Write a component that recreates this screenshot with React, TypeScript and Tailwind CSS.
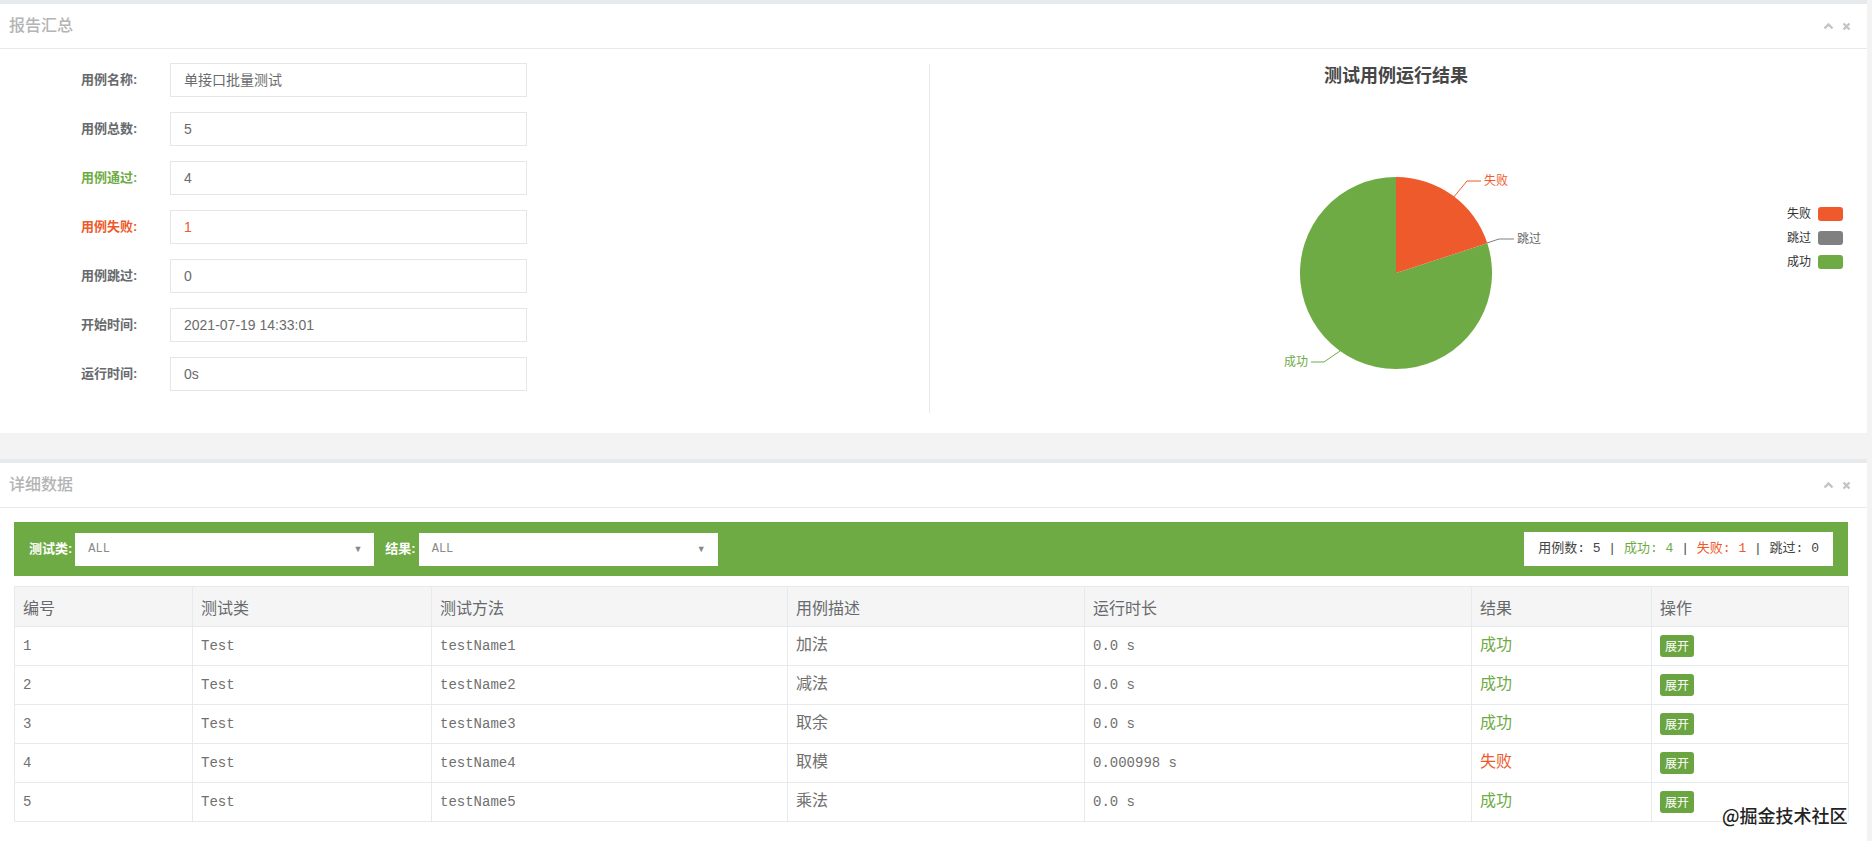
import React from "react";

const GREEN = "#6fab45";
const RED = "#ee5a2b";

const fields = [
  { label: "用例名称:", value: "单接口批量测试", tone: "" },
  { label: "用例总数:", value: "5", tone: "" },
  { label: "用例通过:", value: "4", tone: "pass" },
  { label: "用例失败:", value: "1", tone: "fail" },
  { label: "用例跳过:", value: "0", tone: "" },
  { label: "开始时间:", value: "2021-07-19 14:33:01", tone: "" },
  { label: "运行时间:", value: "0s", tone: "" },
];

const rows = [
  { id: 1, cls: "Test", method: "testName1", desc: "加法", time: "0.0 s", ok: true },
  { id: 2, cls: "Test", method: "testName2", desc: "减法", time: "0.0 s", ok: true },
  { id: 3, cls: "Test", method: "testName3", desc: "取余", time: "0.0 s", ok: true },
  { id: 4, cls: "Test", method: "testName4", desc: "取模", time: "0.000998 s", ok: false },
  { id: 5, cls: "Test", method: "testName5", desc: "乘法", time: "0.0 s", ok: true },
];

function PanelTools() {
  return (
    <div className="flex items-center gap-[8px] text-[#c4c4c4]">
      <svg width="11" height="8" viewBox="0 0 11 8">
        <path d="M1.5 6.5 L5.5 2.5 L9.5 6.5" fill="none" stroke="currentColor" strokeWidth="2.4" />
      </svg>
      <svg width="9" height="9" viewBox="0 0 9 9">
        <path d="M1.5 1.5 L7.5 7.5 M7.5 1.5 L1.5 7.5" fill="none" stroke="currentColor" strokeWidth="2.4" />
      </svg>
    </div>
  );
}

function PanelHeader({ title }: { title: string }) {
  return (
    <div className="h-[45px] border-b border-[#e7eaec] flex items-center justify-between pl-[9px] pr-[16px]">
      <h5 className="text-[16px] font-medium text-[#b4b4b4] leading-none">{title}</h5>
      <PanelTools />
    </div>
  );
}

function ResultChart() {
  // pie: center (466,209), r 96 — 1 fail of 5 starting from 12 o'clock
  return (
    <svg width="937" height="349" viewBox="0 0 937 349" className="block">
      <text x="466" y="18" textAnchor="middle" fontSize="18" fontWeight="bold" fill="#464646">
        测试用例运行结果
      </text>
      <path d="M466 209 L557.3 179.3 A96 96 0 1 1 466 113 Z" fill={GREEN} />
      <path d="M466 209 L466 113 A96 96 0 0 1 557.3 179.3 Z" fill={RED} />
      <path d="M523 134 L537 117 L551 117" fill="none" stroke={RED} strokeWidth="1" />
      <text x="554" y="121" fontSize="12" fill={RED}>失败</text>
      <path d="M557 179 L569 175 L584 175" fill="none" stroke="#808080" strokeWidth="1" />
      <text x="587" y="179" fontSize="12" fill="#666">跳过</text>
      <path d="M410 287 L394 298 L381 298" fill="none" stroke={GREEN} strokeWidth="1" />
      <text x="378" y="302" textAnchor="end" fontSize="12" fill={GREEN}>成功</text>

      <text x="857" y="154" fontSize="12" fill="#333">失败</text>
      <rect x="888" y="143" width="25" height="14" rx="3" fill={RED} />
      <text x="857" y="178" fontSize="12" fill="#333">跳过</text>
      <rect x="888" y="167" width="25" height="14" rx="3" fill="#808080" />
      <text x="857" y="202" fontSize="12" fill="#333">成功</text>
      <rect x="888" y="191" width="25" height="14" rx="3" fill={GREEN} />
    </svg>
  );
}

function Select({ label }: { label: string }) {
  return (
    <div className="flex items-center">
      <span className="text-white font-bold text-[13px] mr-[3px]">{label}</span>
      <div className="w-[299px] h-[33px] bg-white flex items-center justify-between pl-[13px] pr-[12px]">
        <span className="text-[12px] text-[#8a8a8a] font-['Liberation_Mono',monospace]">ALL</span>
        <span className="text-[9px] text-[#888] leading-none">▼</span>
      </div>
    </div>
  );
}

export default function App() {
  const cols = ["w-[178px]", "w-[239px]", "w-[356px]", "w-[297px]", "w-[387px]", "w-[180px]", "w-[197px]"];
  const heads = ["编号", "测试类", "测试方法", "用例描述", "运行时长", "结果", "操作"];

  return (
    <div className="relative min-h-screen bg-[#f3f3f4] pr-[5px] font-['Liberation_Sans','Noto_Sans_CJK_SC',sans-serif] text-[#676a6c]">
      {/* 报告汇总 */}
      <section className="bg-white border-t-4 border-[#e7eaec]">
        <PanelHeader title="报告汇总" />
        <div className="flex h-[384px]">
          <div className="w-[930px] pt-[14px] flex flex-col gap-[15px]">
            {fields.map((f) => (
              <div key={f.label} className="flex items-center pl-[81px]">
                <label
                  className={`w-[89px] text-[13px] font-bold ${
                    f.tone === "pass" ? "text-[#6fab45]" : f.tone === "fail" ? "text-[#ee5a2b]" : "text-[#676a6c]"
                  }`}
                >
                  {f.label}
                </label>
                <div
                  className={`w-[357px] h-[34px] border border-[#e5e6e7] flex items-center px-[13px] text-[14px] ${
                    f.tone === "fail" ? "text-[#ee5a2b]" : "text-[#6b6b6b]"
                  }`}
                >
                  {f.value}
                </div>
              </div>
            ))}
          </div>
          <div className="flex-1 mt-[15px] mb-[20px] border-l border-[#e7eaec]">
            <ResultChart />
          </div>
        </div>
      </section>

      {/* 详细数据 */}
      <section className="mt-[26px] bg-white border-t-4 border-[#e7eaec] min-h-[382px]">
        <PanelHeader title="详细数据" />
        <div className="pl-[14px] pr-[19px] pt-[14px] pb-[20px]">
          <div className="h-[54px] flex items-center justify-between pl-[15px] pr-[15px] bg-[#6fab45]">
            <div className="flex items-center gap-[11px]">
              <Select label="测试类:" />
              <Select label="结果:" />
            </div>
            <div className="h-[34px] bg-white flex items-center px-[14px] text-[13px] font-['Liberation_Mono','Noto_Sans_CJK_SC',monospace] text-[#444] whitespace-pre">
              <span>用例数: 5 | </span>
              <span className="text-[#6fab45]">成功: 4</span>
              <span> | </span>
              <span className="text-[#ee5a2b]">失败: 1</span>
              <span> | 跳过: 0</span>
            </div>
          </div>

          <table className="mt-[10px] w-[1834px] border-collapse table-fixed">
            <thead>
              <tr className="h-[40px] bg-[#f5f5f6]">
                {heads.map((h, i) => (
                  <th
                    key={h}
                    className={`${cols[i]} border border-[#e7eaec] text-left font-normal px-[8px] text-[16px] text-[#676a6c] font-['Noto_Sans_CJK_SC',sans-serif]`}
                  >
                    {h}
                  </th>
                ))}
              </tr>
            </thead>
            <tbody className="font-['Liberation_Mono','Noto_Sans_CJK_SC',monospace] text-[14px] text-[#707070]">
              {rows.map((r) => (
                <tr key={r.id} className="h-[39px]">
                  <td className="border border-[#e7eaec] px-[8px]">{r.id}</td>
                  <td className="border border-[#e7eaec] px-[8px]">{r.cls}</td>
                  <td className="border border-[#e7eaec] px-[8px]">{r.method}</td>
                  <td className="border border-[#e7eaec] px-[8px] text-[16px]">{r.desc}</td>
                  <td className="border border-[#e7eaec] px-[8px]">{r.time}</td>
                  <td className={`border border-[#e7eaec] px-[8px] text-[16px] ${r.ok ? "text-[#6fab45]" : "text-[#ee5a2b]"}`}>
                    {r.ok ? "成功" : "失败"}
                  </td>
                  <td className="border border-[#e7eaec] px-[8px]">
                    <button className="h-[22px] px-[5px] rounded-[3px] bg-[#6aa542] text-white text-[12px] leading-none font-['Noto_Sans_CJK_SC',sans-serif]">
                      展开
                    </button>
                  </td>
                </tr>
              ))}
            </tbody>
          </table>
        </div>
      </section>

      <div className="absolute left-[1722px] top-[802px] text-[18px] font-medium text-[#222] font-['Noto_Sans_CJK_SC',sans-serif] [text-shadow:0_0_2px_#fff,0_0_2px_#fff]">
        @掘金技术社区
      </div>
    </div>
  );
}
